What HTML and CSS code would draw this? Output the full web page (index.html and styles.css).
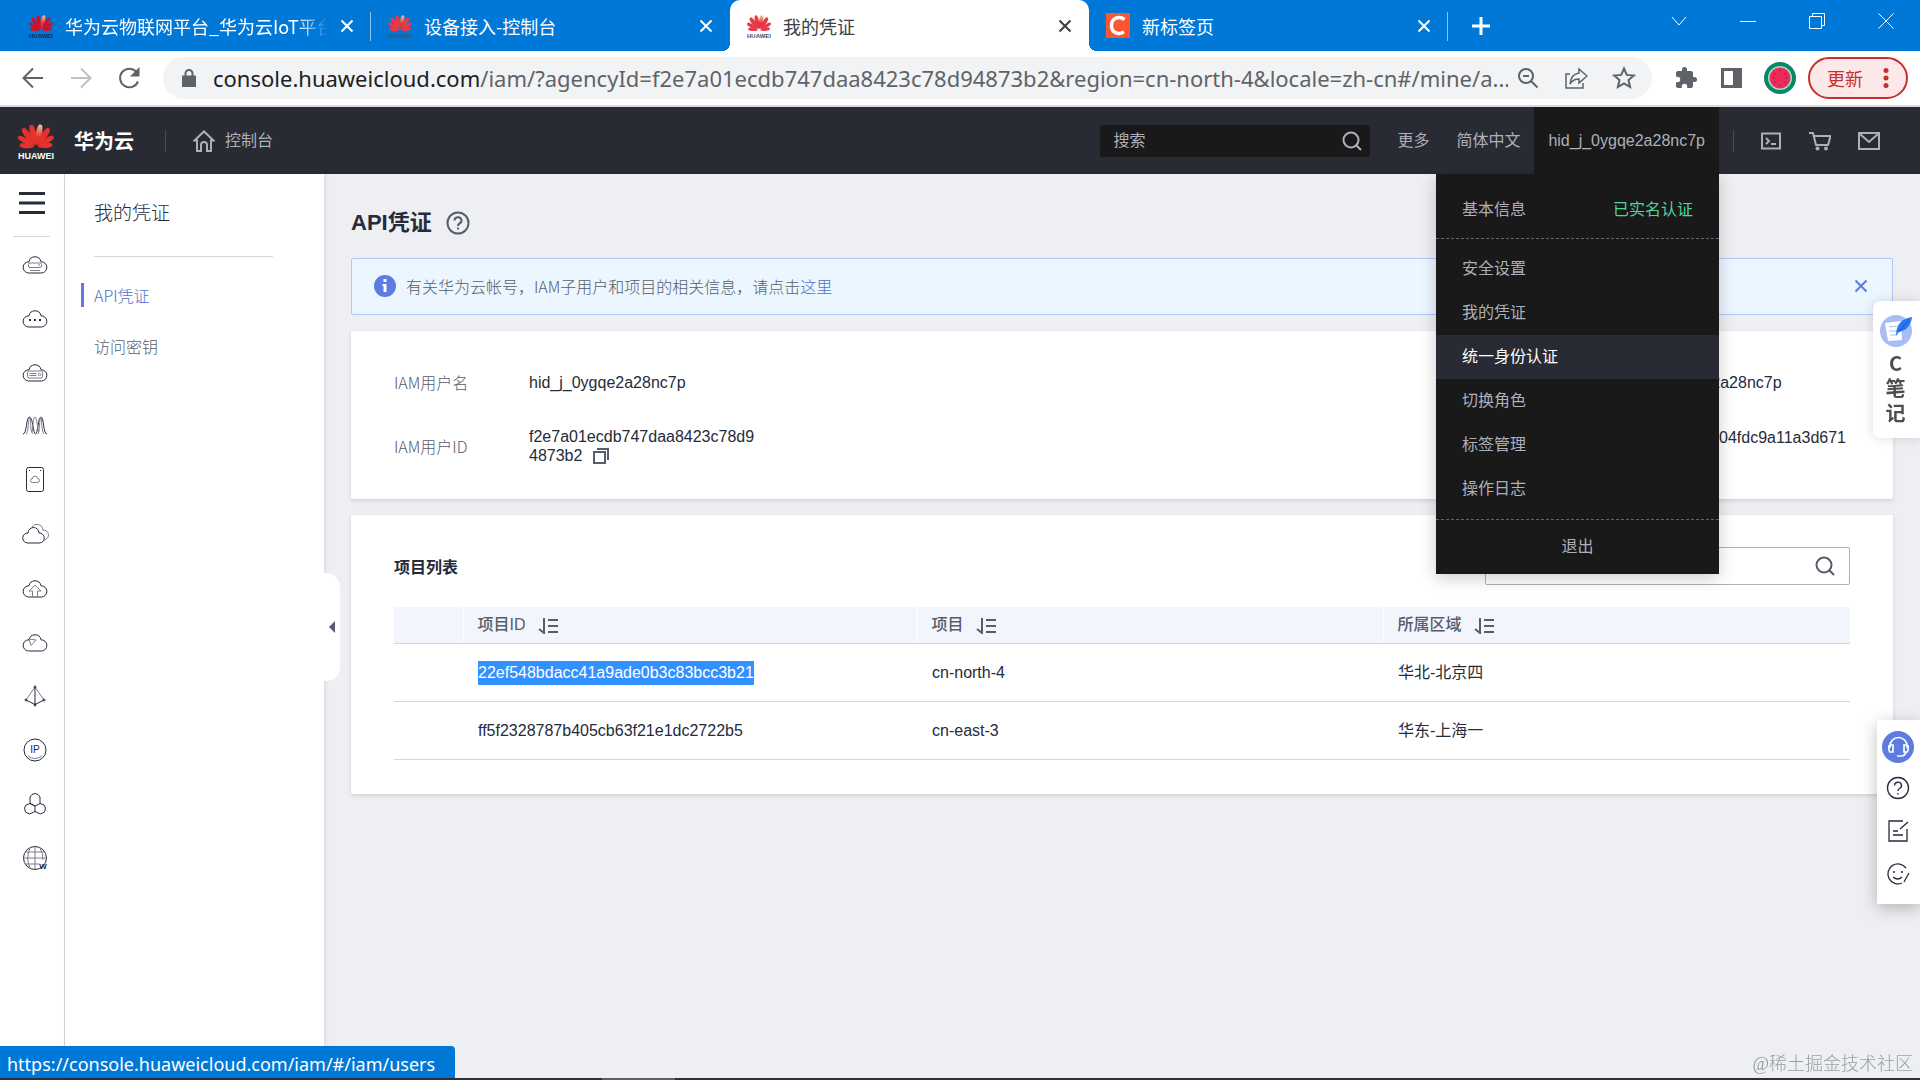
FILE: index.html
```html
<!DOCTYPE html>
<html lang="zh-CN">
<head>
	<meta charset="utf-8">
	<title>我的凭证</title>
	<link rel="stylesheet" href="styles.css">
</head>
<body>
	<!-- shared shapes -->
	<svg class="defs" aria-hidden="true">
		<defs>
			<linearGradient id="petalGlow" x1="0" y1="0" x2="0" y2="1">
				<stop offset="0" stop-color="#f9c39a"/>
				<stop offset=".6" stop-color="#e5322d"/>
			</linearGradient>
			<path id="petal" d="M20 26C16.500 19 15.500 8 18 3Q20 1.500 22 3.500C24.300 10 23 19 20 26z"/>
			<symbol id="flower" viewBox="0 0 40 30">
				<use href="#petal" transform="rotate(-82 20 28) translate(4 8) scale(.8 .7)"/>
				<use href="#petal" transform="rotate(-59 20 28) translate(2 3) scale(.9 .88)"/>
				<use href="#petal" transform="rotate(-35 20 28)"/>
				<use href="#petal" transform="rotate(-12 20 28)"/>
				<use href="#petal" class="lit" transform="rotate(12 20 28)"/>
				<use href="#petal" transform="rotate(35 20 28)"/>
				<use href="#petal" transform="rotate(59 20 28) translate(2 3) scale(.9 .88)"/>
				<use href="#petal" transform="rotate(82 20 28) translate(4 8) scale(.8 .7)"/>
			</symbol>
			<symbol id="cloud" viewBox="0 0 28 28">
				<path d="M7.500 23a5.600 5.600 0 0 1 .5-11.200a6.100 6.100 0 0 1 12 0a5.600 5.600 0 0 1 .5 11.200z"/>
			</symbol>
			<symbol id="cross" viewBox="0 0 14 14">
				<path d="M1.500 1.500l11 11M12.500 1.500l-11 11"/>
			</symbol>
			<symbol id="magnifier" viewBox="0 0 20 20">
				<circle cx="9" cy="9" r="7.500"/>
				<path d="M14 14l5 5"/>
			</symbol>
			<symbol id="sort" viewBox="0 0 20 16">
				<path d="M6 0v15L1 11M10 2h10M10 8h10M10 14h10"/>
			</symbol>
		</defs>
	</svg>

	<!-- browser tabs -->
	<div class="tabs">
		<div class="tab divided">
			<svg class="favicon dark" viewBox="0 0 24 25"><use href="#flower" width="24" height="19"/><text x="12" y="25">HUAWEI</text></svg>
			<span class="tab-title fade">华为云物联网平台_华为云IoT平台</span>
			<button class="close" aria-label="关闭"><svg><use href="#cross"/></svg></button>
		</div>
		<div class="tab">
			<svg class="favicon" viewBox="0 0 24 25"><use href="#flower" width="24" height="19"/><text x="12" y="25">HUAWEI</text></svg>
			<span class="tab-title">设备接入-控制台</span>
			<button class="close" aria-label="关闭"><svg><use href="#cross"/></svg></button>
		</div>
		<div class="tab active">
			<svg class="favicon" viewBox="0 0 24 25"><use href="#flower" width="24" height="19"/><text x="12" y="25">HUAWEI</text></svg>
			<span class="tab-title">我的凭证</span>
			<button class="close" aria-label="关闭"><svg><use href="#cross"/></svg></button>
		</div>
		<div class="tab divided">
			<svg class="favicon" viewBox="0 0 24 25"><path d="M0 0h24v25H0z" fill="#fc5531"/><path d="M18.500 6.500C13 2.500 5.500 5 5.500 12.500S12 22 18 19" fill="none" stroke="#fff" stroke-width="3.500"/></svg>
			<span class="tab-title">新标签页</span>
			<button class="close" aria-label="关闭"><svg><use href="#cross"/></svg></button>
		</div>
		<button class="new-tab" aria-label="新标签页"><svg viewBox="0 0 18 18"><path d="M9 0v18M0 9h18"/></svg></button>
		<div class="window-buttons">
			<button aria-label="搜索标签页"><svg viewBox="0 0 16 16"><path d="M1 4l7 8 7-8"/></svg></button>
			<button aria-label="最小化"><svg viewBox="0 0 16 16"><path d="M0 8.500h16"/></svg></button>
			<button aria-label="还原"><svg viewBox="0 0 16 16"><path d="M.5 3.500h12v12H.5zM3.500 3V.5h12v12H13"/></svg></button>
			<button aria-label="关闭窗口"><svg viewBox="0 0 16 16"><path d="M.5.5l15 15M15.500.5l-15 15"/></svg></button>
		</div>
	</div>

	<!-- address bar -->
	<div class="toolbar">
		<button aria-label="后退"><svg viewBox="0 0 24 24"><path d="M22 12H3M12 2.500L2.500 12l9.500 9.500"/></svg></button>
		<button class="off" aria-label="前进"><svg viewBox="0 0 24 24"><path d="M2 12h19M12 2.500l9.500 9.500-9.500 9.500"/></svg></button>
		<button aria-label="重新加载"><svg viewBox="0 0 24 24"><path d="M21 15.500A9.300 9.300 0 1 1 19.500 6"/><path class="solid" d="M22.500 1v9.500H13z"/></svg></button>
		<div class="omnibox">
			<svg class="lock" viewBox="0 0 14 18"><path class="solid" d="M0 6.500h14V18H0z"/><path d="M3.500 8V4.500a3.500 3.500 0 0 1 7 0V8"/></svg>
			<span class="url"><b>console.huaweicloud.com</b>/iam/?agencyId=f2e7a01ecdb747daa8423c78d94873b2&amp;region=cn-north-4&amp;locale=zh-cn#/mine/a...</span>
			<button aria-label="缩放"><svg viewBox="0 0 24 24"><circle cx="10" cy="10" r="7"/><path d="M15 15l6.500 6.500M7 10h6"/></svg></button>
			<button aria-label="分享"><svg viewBox="0 0 24 24"><path class="thin" d="M6 8H2v14h17v-5M15 3l8 7-8 7v-4q-6 0-9 5 1-10 9-11z"/></svg></button>
			<button aria-label="收藏"><svg viewBox="0 0 24 24"><path d="M12 2.500l2.800 6.400 7 .6-5.300 4.600 1.600 6.900-6.100-3.700L5.900 21l1.600-6.900L2.200 9.500l7-.6z"/></svg></button>
		</div>
		<div class="extensions">
			<button aria-label="扩展程序"><svg viewBox="0 0 24 24"><path class="solid" d="M20.500 11H19V7a2 2 0 0 0-2-2h-4V3.500a2.500 2.500 0 0 0-5 0V5H4a2 2 0 0 0-2 2v3.800h1.500a2.700 2.700 0 0 1 0 5.400H2V20a2 2 0 0 0 2 2h3.800v-1.500a2.700 2.700 0 0 1 5.400 0V22H17a2 2 0 0 0 2-2v-4h1.500a2.500 2.500 0 0 0 0-5z"/></svg></button>
			<button aria-label="侧边栏"><svg viewBox="0 0 24 24"><path class="solid" d="M1 2h21v20H1zM4 5v14h9V5z" fill-rule="evenodd"/></svg></button>
		</div>
		<svg class="avatar" viewBox="0 0 32 32"><circle cx="16" cy="16" r="16" fill="#0b8468"/><circle cx="16" cy="16" r="12" fill="#9fe0c4"/><circle cx="16" cy="16" r="10.500" fill="#ee2a5c"/><path d="M16 8v1M16 23v1M9 16h1M22 16h1M11 11v1M21 11v1M11 20v1M21 20v1" stroke="#5a1230"/></svg>
		<button class="update">更新<svg viewBox="0 0 6 20"><circle cx="3" cy="2.500" r="2.500"/><circle cx="3" cy="10" r="2.500"/><circle cx="3" cy="17.500" r="2.500"/></svg></button>
	</div>

	<!-- console header -->
	<header class="header">
		<a class="brand" href="#">
			<svg class="logo" viewBox="0 0 36 38"><use href="#flower" width="36" height="27"/><text x="18" y="37">HUAWEI</text></svg>
			<span>华为云</span>
		</a>
		<a class="home" href="#">
			<svg viewBox="0 0 22 22"><path d="M1.500 10.500L11 1.500l9.500 9H18V21h-4v-6a3 3 0 0 0-6 0v6H4V10.500z"/></svg>
			控制台
		</a>
		<div class="header-search">
			<input type="text" placeholder="搜索" aria-label="搜索">
			<button aria-label="搜索"><svg><use href="#magnifier"/></svg></button>
		</div>
		<a class="header-link" href="#">更多</a>
		<a class="header-link" href="#">简体中文</a>
		<div class="user">
			<a class="user-name" href="#">hid_j_0ygqe2a28nc7p</a>
			<div class="menu">
				<a class="menu-top" href="#"><span>基本信息</span><span class="verified">已实名认证</span></a>
				<ul>
					<li><a href="#">安全设置</a></li>
					<li><a href="#">我的凭证</a></li>
					<li><a class="hover" href="#">统一身份认证</a></li>
					<li><a href="#">切换角色</a></li>
					<li><a href="#">标签管理</a></li>
					<li><a href="#">操作日志</a></li>
				</ul>
				<a class="logout" href="#">退出</a>
			</div>
		</div>
		<div class="header-icons">
			<button aria-label="CloudShell"><svg viewBox="0 0 22 22"><path d="M2 3.500h18v15H2zM6 8l3 3-3 3M11 14h5"/></svg></button>
			<button aria-label="购物车"><svg viewBox="0 0 22 22"><path d="M0 3h4l3 12h12l2.500-9H5"/><circle cx="8.500" cy="18.500" r="1"/><circle cx="17" cy="18.500" r="1"/></svg></button>
			<button aria-label="消息"><svg viewBox="0 0 22 22"><path d="M1 3h20v16H1zM2 4l9 8 9-8"/></svg></button>
		</div>
	</header>

	<div class="main">
		<nav class="rail">
			<button class="burger" aria-label="服务列表"><svg viewBox="0 0 26 22"><path d="M0 1.500h26M0 11h26M0 20.500h26"/></svg></button>
			<ul>
				<li><a href="#" aria-label="弹性云服务器"><svg viewBox="0 0 28 28"><use href="#cloud"/><rect class="faint" x="7.500" y="13" width="13" height="4.500" rx="1.500"/><path class="faint" d="M17 15h2M9 20.500h10"/></svg></a></li>
				<li><a href="#" aria-label="云耀云服务器"><svg viewBox="0 0 28 28"><use href="#cloud"/><path class="dots" d="M8 16h2M13 16h2M18 16h2"/></svg></a></li>
				<li><a href="#" aria-label="裸金属服务器"><svg viewBox="0 0 28 28"><use href="#cloud"/><rect class="faint" x="6.500" y="13" width="15" height="7" rx="1.500"/><path class="faint" d="M8.500 15.500h7M8.500 17.500h7"/><circle class="faint" cx="18.500" cy="16.500" r="1.200"/></svg></a></li>
				<li><a href="#" aria-label="弹性伸缩"><svg viewBox="0 0 28 28"><path d="M2 22C6 22 5 5 8.500 5S12 22 14.500 22 17 5 20 5s2 17 6 17"/><path class="faint" d="M5 22C8 20 7 5 9 5M12 22C9 20 10 7 9 5M11 20c1-4 1-15 3-15s2 11 4 15M17 22c2-4 1-14 3-17M23 22c-3-4-2-14-3-17"/></svg></a></li>
				<li><a href="#" aria-label="云硬盘"><svg viewBox="0 0 28 28"><rect x="5.500" y="1.500" width="17" height="24" rx="2"/><path class="faint" d="M11.500 16.500a2 2 0 0 1 0-4 2.500 2.500 0 0 1 5 0 2 2 0 0 1 0 4z"/><path d="M8 4.500h1M19 4.500h1"/></svg></a></li>
				<li><a href="#" aria-label="专属主机"><svg viewBox="0 0 28 28"><path d="M6.500 23a5 5 0 0 1 .5-10 5.500 5.500 0 0 1 11 0 5 5 0 0 1 .5 10z"/><path class="faint" d="M11 7a6 6 0 0 1 11 3 5 5 0 0 1 1 10"/></svg></a></li>
				<li><a href="#" aria-label="对象存储"><svg viewBox="0 0 28 28"><use href="#cloud"/><path class="faint" d="M11.500 23v-6H8l6-6 6 6h-3.500v6"/></svg></a></li>
				<li><a href="#" aria-label="云监控"><svg viewBox="0 0 28 28"><use href="#cloud"/><path class="faint" d="M8 11l7 1-5 5.500z"/></svg></a></li>
				<li><a href="#" aria-label="虚拟私有云"><svg viewBox="0 0 28 28"><path class="faint" d="M14 5L5 18M14 5l9 13"/><path d="M14 5v18M5 18l9 4.500 9-4.500"/><circle cx="14" cy="5" r="1"/><circle cx="5" cy="18" r="1"/><circle cx="23" cy="18" r="1"/><circle cx="14" cy="23" r="1"/></svg></a></li>
				<li><a href="#" aria-label="弹性公网IP"><svg viewBox="0 0 28 28"><circle cx="14" cy="14" r="11"/><path class="faint" d="M7 20q7 5 14 0"/><text class="ip" x="14" y="17">IP</text></svg></a></li>
				<li><a href="#" aria-label="区块链"><svg viewBox="0 0 28 28"><path d="M9 13.500V7l2-2.500 3-1 3 1L19 7v6.500l-5 2.500zM9 13.500L5 15l-1.500 3 1 4 4 2 5.500-2.500V16zM19 13.500l4 1.500 1.500 3-1 4-4 2-5.500-2.500"/></svg></a></li>
				<li><a href="#" aria-label="域名注册"><svg viewBox="0 0 28 28"><circle cx="14" cy="14" r="11.500"/><path class="faint" d="M14 2.500v23M2.500 14h23M4.500 8h19M4.500 20h14M9 4Q4.500 14 9 24M19 4q3 5 3 12"/><text class="w" x="22" y="25">W</text></svg></a></li>
			</ul>
		</nav>

		<aside class="sidebar">
			<h2>我的凭证</h2>
			<a class="current" href="#">API凭证</a>
			<a href="#">访问密钥</a>
			<button class="collapse" aria-label="收起"><svg viewBox="0 0 6 12"><path d="M6 0v12L0 6z"/></svg></button>
		</aside>

		<main class="content">
			<h1>API凭证
				<svg viewBox="0 0 24 24"><circle cx="12" cy="12" r="10.500"/><path d="M8.500 9.500a3.500 3.300 0 1 1 5 3q-1.500.8-1.500 2.500M12 16.500v2"/></svg>
			</h1>

			<div class="notice">
				<svg class="info" viewBox="0 0 22 22"><circle cx="11" cy="11" r="11"/><path d="M9.500 4h3v3h-3zM8.500 9h4v8h-3v-6h-1z"/></svg>
				<p>有关华为云帐号，IAM子用户和项目的相关信息，请点击<a href="#">这里</a></p>
				<button aria-label="关闭"><svg><use href="#cross"/></svg></button>
			</div>

			<section class="card account">
				<dl>
					<dt>IAM用户名</dt>
					<dd>hid_j_0ygqe2a28nc7p</dd>
					<dt>IAM用户ID</dt>
					<dd>f2e7a01ecdb747daa8423c78d94873b2
						<button aria-label="复制"><svg viewBox="0 0 16 16"><path d="M1 4h11v11H1zM4 1h11v11"/></svg></button>
					</dd>
				</dl>
				<div class="owner">
					<p>hid_j_0ygqe2a28nc7p</p>
					<p class="owner-id">04fdc9a11a3d671</p>
				</div>
			</section>

			<section class="card projects">
				<div class="projects-head">
					<h3>项目列表</h3>
					<div class="search">
						<input type="text" aria-label="搜索项目">
						<button aria-label="搜索"><svg><use href="#magnifier"/></svg></button>
					</div>
				</div>
				<table>
					<colgroup><col class="col-pick"><col class="col-id"><col class="col-name"><col></colgroup>
					<thead>
						<tr>
							<th></th>
							<th>项目ID<svg><use href="#sort"/></svg></th>
							<th>项目<svg><use href="#sort"/></svg></th>
							<th>所属区域<svg><use href="#sort"/></svg></th>
						</tr>
					</thead>
					<tbody>
						<tr>
							<td></td>
							<td><span class="selected">22ef548bdacc41a9ade0b3c83bcc3b21</span></td>
							<td>cn-north-4</td>
							<td>华北-北京四</td>
						</tr>
						<tr>
							<td></td>
							<td>ff5f2328787b405cb63f21e1dc2722b5</td>
							<td>cn-east-3</td>
							<td>华东-上海一</td>
						</tr>
					</tbody>
				</table>
			</section>
		</main>
	</div>

	<!-- floating widgets -->
	<a class="notes" href="#">
		<svg viewBox="0 0 32 32"><circle cx="16" cy="16" r="16" fill="#a9bdf5"/><path d="M5 8l16-2 1 19-14 1z" fill="#fff"/><path d="M9 12l8-1M9 16h8M10 20h7" stroke="#a9bdf5" fill="none"/><path d="M16 19C17 8 22 4 32 2c-1 9-6 14-14 15z" fill="#2878f5"/><path d="M16 20L28 6" stroke="#1450d0" fill="none"/></svg>
		<span>C笔记</span>
	</a>
	<div class="helpers">
		<button class="service" aria-label="在线客服"><svg viewBox="0 0 32 32"><path d="M8 17v-2a8 8 0 0 1 17 0v2M8 14h3v7H8q-1.500-1-1-7M25 14h-3v7h3q1.500-1 1-7M24 21q-1 4-5 4M15 25h4"/></svg></button>
		<button aria-label="帮助"><svg viewBox="0 0 24 24"><circle cx="12" cy="12" r="10.500"/><path d="M8.500 9.500a3.500 3.300 0 1 1 5 3q-1.500.8-1.500 2.500M12 17v1.500"/></svg></button>
		<button aria-label="建议"><svg viewBox="0 0 24 24"><path d="M17 2H3v20h18V10M22 3l-8 7M7 12h5M7 16h10"/></svg></button>
		<button aria-label="满意度"><svg viewBox="0 0 24 24"><path d="M20 6a10 10 0 1 0-4 15M23 11l-5 9M7 10h2M15 10h2M7 15q5 4 9 0"/></svg></button>
	</div>

	<div class="status">https://console.huaweicloud.com/iam/#/iam/users</div>
	<div class="watermark">@稀土掘金技术社区</div>
	<div class="taskbar"><span></span></div>
</body>
</html>
```
FILE: styles.css
```css
* {
	box-sizing: border-box;
	margin: 0;
	padding: 0;
}

html, body {
	height: 100%;
}

body {
	display: flex;
	flex-direction: column;
	overflow: hidden;
	background: #edeff3;
	color: #252b3a;
	font: 16px/24px "Liberation Sans", "Noto Sans CJK SC", sans-serif;
}

ul {
	list-style: none;
}

a {
	color: inherit;
	text-decoration: none;
}

button {
	display: flex;
	align-items: center;
	justify-content: center;
	border: 0;
	background: none;
	color: inherit;
	font: inherit;
}

input {
	border: 0;
	outline: 0;
	background: none;
	color: inherit;
	font: inherit;
}

svg {
	flex: none;
	fill: none;
	stroke: currentColor;
}

svg text {
	stroke: none;
	fill: currentColor;
	text-anchor: middle;
}

.defs {
	position: absolute;
	width: 0;
	height: 0;
}

/* tabs */
.tabs {
	display: flex;
	height: 51px;
	padding-left: 12px;
	background: #0078d8;
	color: #fff;
	font-family: "Noto Sans CJK SC", sans-serif;
	font-size: 18px;
}

.tab {
	position: relative;
	display: flex;
	flex: 0 1 359px;
	align-items: center;
	gap: 12px;
	min-width: 0;
	padding: 0 17px 0 17px;
}

.tab.divided::after {
	content: "";
	position: absolute;
	top: 12px;
	right: 0;
	width: 1px;
	height: 29px;
	background: #8cc2ee;
}

.tab.active {
	border-radius: 10px 10px 0 0;
	background: #fff;
	color: #3c4043;
}

.tab.active::before,
.tab.active::after {
	content: "";
	position: absolute;
	bottom: 0;
	width: 8px;
	height: 8px;
}

.tab.active::before {
	right: 100%;
	background: radial-gradient(circle at 0 0, transparent 8px, #fff 8px);
}

.tab.active::after {
	left: 100%;
	background: radial-gradient(circle at 100% 0, transparent 8px, #fff 8px);
}

.favicon {
	width: 24px;
	height: 25px;
	fill: #e8384a;
	stroke: none;
	font: bold 6px "Liberation Sans", sans-serif;
}

.favicon text {
	fill: #45506b;
}

.favicon.dark {
	fill: #c8142d;
}

.favicon.dark text {
	fill: #16283c;
}

.tab-title {
	flex: 1;
	overflow: hidden;
	white-space: nowrap;
}

.tab-title.fade {
	mask-image: linear-gradient(to right, #000 88%, transparent);
}

.close svg {
	width: 14px;
	height: 14px;
	stroke-width: 2;
}

.new-tab {
	width: 66px;
}

.new-tab svg {
	width: 18px;
	height: 18px;
	stroke-width: 3;
}

.window-buttons {
	display: flex;
	height: 42px;
	margin-left: auto;
}

.window-buttons button {
	width: 69px;
}

.window-buttons svg {
	width: 16px;
	height: 16px;
}

/* address bar */
.toolbar {
	display: flex;
	align-items: center;
	gap: 24px;
	height: 56px;
	padding: 0 12px 0 21px;
	border-bottom: 2px solid #d9dadc;
	background: #fff;
	color: #5f6368;
}

.toolbar svg {
	width: 24px;
	height: 24px;
	stroke-width: 2;
}

.toolbar .thin {
	stroke-width: 1.5;
}

.toolbar .solid {
	fill: currentColor;
	stroke: none;
}

.toolbar .off {
	color: #bdc1c6;
}

.omnibox {
	display: flex;
	flex: 1;
	align-items: center;
	gap: 24px;
	min-width: 0;
	height: 42px;
	margin: 0 -2px;
	padding: 0 16px 0 19px;
	border-radius: 21px;
	background: #f1f3f4;
}

.omnibox .lock {
	width: 14px;
	height: 18px;
}

.url {
	flex: 1;
	margin: 0 -16px 0 -7px;
	overflow: hidden;
	font: 22px/32px "Noto Sans", sans-serif;
	white-space: nowrap;
}

.url b {
	color: #202124;
	font-weight: normal;
}

.extensions {
	display: flex;
	gap: 22px;
}

.toolbar .avatar {
	width: 32px;
	height: 32px;
	margin-left: -4px;
	stroke-width: 1;
	stroke: none;
}

.update {
	gap: 20px;
	width: 100px;
	height: 42px;
	margin-left: -12px;
	border: 2px solid #c5302c;
	border-radius: 21px;
	background: #fce8e8;
	color: #c5302c;
	font: 18px "Noto Sans CJK SC", sans-serif;
}

.update svg {
	width: 6px;
	height: 20px;
	fill: currentColor;
	stroke: none;
}

/* console header */
.header {
	display: flex;
	align-items: center;
	height: 67px;
	padding: 0 40px 0 18px;
	background: #282b33;
	color: #adb0b8;
}

.brand {
	display: flex;
	align-items: center;
	gap: 20px;
	padding-right: 31px;
	border-right: 1px solid #4a4d55;
	color: #fff;
	font: bold 20px/22px "Noto Sans CJK SC", sans-serif;
}

.logo {
	width: 36px;
	height: 38px;
	margin: -8px 0;
	fill: #e5322d;
	stroke: none;
	font: bold 9px "Liberation Sans", sans-serif;
}

.lit {
	fill: url(#petalGlow);
}

.home {
	display: flex;
	align-items: center;
	gap: 10px;
	margin-left: 27px;
}

.home svg {
	width: 22px;
	height: 22px;
	stroke-width: 2;
}

.header-search {
	display: flex;
	width: 270px;
	height: 32px;
	margin-left: auto;
	padding: 0 8px 0 13px;
	border-radius: 2px;
	background: #191919;
}

.header-search input {
	flex: 1;
	min-width: 0;
}

.header-search input::placeholder {
	color: #adb0b8;
}

.header-search svg {
	width: 20px;
	height: 20px;
	stroke-width: 2;
}

.header-link {
	margin-left: 27px;
}

.user {
	position: relative;
	height: 100%;
	margin-left: 14px;
	background: #191919;
}

.user-name {
	display: flex;
	align-items: center;
	height: 100%;
	padding: 0 14px;
}

.menu {
	position: absolute;
	top: 100%;
	right: 0;
	z-index: 2;
	width: 283px;
	background: #191919;
	box-shadow: 0 4px 16px rgba(0, 0, 0, .2);
}

.menu a {
	display: flex;
	align-items: center;
	height: 44px;
	padding: 0 26px;
}

.menu .hover {
	background: #282b33;
	color: #fff;
}

.menu ul {
	padding: 8px 0;
	border-top: 1px dashed #62646a;
	border-bottom: 1px dashed #62646a;
}

.menu .menu-top {
	justify-content: space-between;
	height: 64px;
	padding-top: 8px;
}

.verified {
	color: #50d4a0;
}

.menu .logout {
	justify-content: center;
	height: 54px;
}

.header-icons {
	display: flex;
	gap: 27px;
	margin-left: 14px;
	padding-left: 26px;
	border-left: 1px solid #4a4d55;
}

.header-icons svg {
	width: 22px;
	height: 22px;
	stroke-width: 2;
}

/* page body */
.main {
	display: flex;
	flex: 1;
	min-height: 0;
}

.rail {
	flex: none;
	width: 65px;
	border-right: 1px solid #d5d7db;
	background: #fff;
}

.burger {
	width: 37px;
	height: 63px;
	margin: 0 13px;
	padding-bottom: 5px;
	border-bottom: 1px solid #d5d7db;
}

.burger svg {
	width: 26px;
	height: 22px;
	stroke-width: 3;
}

.rail ul {
	padding-left: 6px;
}

.rail li a {
	display: flex;
	align-items: center;
	justify-content: center;
	height: 54px;
}

.rail li svg {
	width: 28px;
	height: 28px;
	font: 8px "Liberation Sans", sans-serif;
}

.rail .faint {
	stroke: #7b7f89;
}

.rail .dots {
	stroke-width: 2;
}

.rail .w {
	font-weight: bold;
}

.rail .ip {
	font-size: 10px;
}

.sidebar {
	position: relative;
	flex: none;
	width: 259px;
	padding: 19px 29px;
	background: #fff;
	box-shadow: 1px 0 4px rgba(0, 0, 0, .1);
	color: #575d6c;
	font-family: "Noto Sans CJK SC", sans-serif;
}

.sidebar h2 {
	width: 179px;
	height: 64px;
	margin-bottom: 26px;
	border-bottom: 1px solid #d5d7db;
	color: #252b3a;
	font-size: 19px;
	font-weight: 300;
	line-height: 38px;
}

.sidebar a {
	display: block;
	margin: 0 0 27px -13px;
	padding-left: 10px;
	border-left: 3px solid transparent;
	font-weight: 300;
}

.sidebar .current {
	border-color: #5e7ce0;
	color: #526ecc;
}

.collapse {
	position: absolute;
	top: 399px;
	left: 100%;
	width: 16px;
	height: 108px;
	border-radius: 0 14px 14px 0;
	background: #fff;
	color: #575d6c;
}

.collapse svg {
	width: 6px;
	height: 12px;
	fill: currentColor;
	stroke: none;
}

.content {
	flex: 1;
	min-width: 0;
	padding: 33px 27px;
}

.content h1 {
	display: flex;
	align-items: center;
	gap: 14px;
	height: 32px;
	margin-bottom: 19px;
	font-size: 22px;
}

.content h1 svg {
	width: 24px;
	height: 24px;
	color: #575d6c;
	stroke-width: 2;
}

.notice {
	display: flex;
	align-items: center;
	gap: 10px;
	height: 57px;
	margin-bottom: 16px;
	padding: 0 24px 2px 22px;
	border: 1px solid #b4c5f5;
	border-radius: 2px;
	background: #ebf6ff;
	color: #575d6c;
	font-family: "Noto Sans CJK SC", sans-serif;
	font-weight: 300;
}

.notice p {
	flex: 1;
}

.notice a {
	color: #526ecc;
}

.notice button {
	color: #5e7ce0;
}

.notice button svg {
	width: 14px;
	height: 14px;
	stroke-width: 2;
}

.info {
	width: 22px;
	height: 22px;
	fill: #5e7ce0;
	stroke: none;
}

.info path {
	fill: #fff;
}

.card {
	border-radius: 2px;
	background: #fff;
	box-shadow: 0 2px 4px rgba(0, 0, 0, .12);
}

.account {
	display: flex;
	justify-content: space-between;
	height: 168px;
	margin-bottom: 16px;
	padding: 32px 43px;
	line-height: 19px;
}

.account dl {
	display: grid;
	grid-template-columns: 135px 232px;
	grid-template-rows: 38px 38px;
	row-gap: 26px;
	align-items: center;
}

.account dt {
	color: #575d6c;
	font-family: "Noto Sans CJK SC", sans-serif;
	font-weight: 300;
}

.account dd {
	overflow-wrap: anywhere;
}

.account button {
	display: inline-block;
	margin-left: 6px;
	height: 16px;
	vertical-align: text-bottom;
	color: #575d6c;
}

.account button svg {
	width: 16px;
	height: 16px;
	stroke-width: 2;
}

.owner {
	width: 225px;
	padding: 10px 0;
}

.owner-id {
	margin-top: 36px;
	padding-right: 4px;
	text-align: right;
}

.projects {
	padding: 32px 43px 34px;
}

.projects-head {
	display: flex;
	align-items: center;
	justify-content: space-between;
	margin-bottom: 22px;
}

.projects h3 {
	padding-top: 3px;
	font-size: 16px;
}

.search {
	display: flex;
	width: 365px;
	height: 38px;
	padding: 0 14px;
	border: 1px solid #adb0b8;
	border-radius: 2px;
}

.search input {
	flex: 1;
	min-width: 0;
}

.search svg {
	width: 20px;
	height: 20px;
	color: #575d6c;
	stroke-width: 2;
}

table {
	width: 100%;
	border-collapse: collapse;
	table-layout: fixed;
}

.col-pick {
	width: 69px;
}

.col-id {
	width: 454px;
}

.col-name {
	width: 466px;
}

th {
	height: 36px;
	padding: 1px 14px 0;
	border-bottom: 1px solid #d5d7db;
	background: #f2f5fc;
	color: #575d6c;
	font-weight: 500;
	text-align: left;
}

th + th {
	border-left: 1px solid #fff;
}

th svg {
	width: 20px;
	height: 16px;
	margin-left: 12px;
	stroke-width: 2;
	vertical-align: middle;
}

td {
	height: 58px;
	padding: 2px 15px 0;
	border-bottom: 1px solid #d5d7db;
}

.selected {
	display: inline-block;
	background: #3390ff;
	color: #fff;
}

/* floating widgets */
.notes {
	position: fixed;
	top: 301px;
	right: 0;
	display: flex;
	flex-direction: column;
	align-items: center;
	width: 47px;
	height: 137px;
	padding: 14px 2px 0 0;
	border-radius: 8px 0 0 8px;
	background: #fff;
	box-shadow: 0 0 12px rgba(0, 0, 0, .15);
	color: #4d4d4d;
	font: bold 20px/25px "Noto Sans CJK SC", sans-serif;
}

.notes svg {
	width: 32px;
	height: 32px;
	margin-bottom: 3px;
	stroke: none;
}

.notes span {
	width: 20px;
	text-align: center;
	word-break: break-all;
}

.helpers {
	position: fixed;
	top: 720px;
	right: 0;
	display: flex;
	flex-direction: column;
	align-items: center;
	gap: 19px;
	width: 43px;
	height: 184px;
	padding: 11px 1px 0 0;
	background: #fff;
	box-shadow: 0 4px 16px rgba(0, 0, 0, .25);
}

.helpers svg {
	width: 24px;
	height: 24px;
	stroke-width: 1.3;
}

.helpers .service {
	margin-bottom: -6px;
	border-radius: 50%;
	background: #5e7ce0;
	color: #fff;
}

.helpers .service svg {
	width: 32px;
	height: 32px;
	stroke-width: 1.7;
}

.status {
	position: fixed;
	bottom: 2px;
	left: 0;
	height: 32px;
	padding: 0 20px 0 7px;
	border-radius: 0 4px 0 0;
	background: #0078d8;
	color: #fff;
	font: 18px/36px "Noto Sans", sans-serif;
}

.watermark {
	position: fixed;
	right: 7px;
	bottom: 3px;
	color: #9a9da3;
	font: 300 18px/26px "Liberation Serif", "Noto Sans CJK SC", serif;
}

.taskbar {
	flex: none;
	height: 2px;
	background: #2b2f36;
}

.taskbar span {
	display: block;
	width: 73px;
	height: 2px;
	margin-left: 602px;
	background: #5d6066;
}
```
